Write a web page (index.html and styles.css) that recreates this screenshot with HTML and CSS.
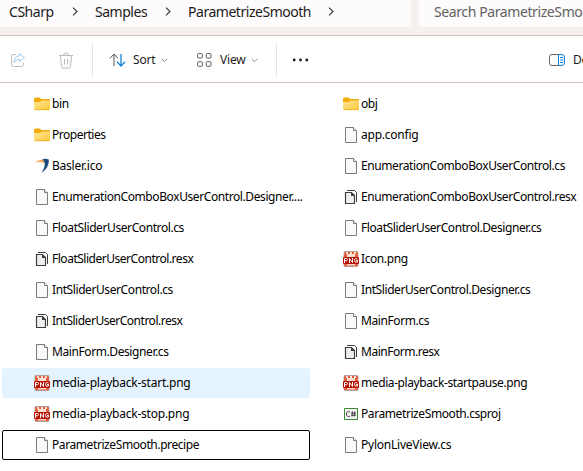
FILE: index.html
```html
<!DOCTYPE html>
<html lang="en">
<head>
<meta charset="utf-8">
<title>ParametrizeSmooth</title>
<link rel="stylesheet" href="styles.css">
</head>
<body>
<svg class="defs" width="0" height="0">
  <defs>
    <linearGradient id="gold" x1="0" y1="0" x2="1" y2="1"><stop offset="0" stop-color="#ffe69a"/><stop offset="1" stop-color="#ffc937"/></linearGradient>
    <linearGradient id="swoosh" x1="0" y1="0" x2="1" y2="0"><stop offset="0" stop-color="#f9c88a"/><stop offset="1" stop-color="#e8903a"/></linearGradient>
  </defs>
  <symbol id="folder" viewBox="0 0 16 16"><path d="M0 3q0-1.500 1.500-1.500h4L7.500 3H15q1 0 1 1v3H0z" fill="#f2ab0d"/><path d="M0 6h6l2-1.500h8V13q0 1-1 1H1q-1 0-1-1z" fill="url(#gold)"/><path d="M.5 13.700h15" stroke="#e5a918" stroke-width=".7"/></symbol>
  <symbol id="file" viewBox="0 0 16 16"><path d="M2.500.5h8l3 3v12h-11z" fill="#f9f9f9" stroke="#7b7b7b"/><path d="M10.500.5v3h3" fill="#fff" stroke="#7b7b7b"/></symbol>
  <symbol id="resx" viewBox="0 0 16 16"><path d="M4 1.500h7.500l2 2V13" fill="none" stroke="#3f3f3f"/><path d="M2.500 3.500h6l3 3v8h-9z" fill="#efeff2" stroke="#3f3f3f" stroke-width="1.200"/><path d="M8 3l4 4H8z" fill="#3f3f3f"/></symbol>
  <symbol id="basler" viewBox="0 0 16 16"><path d="M8 15.500Q13 12 14.500 7l.8-1Q14 12 8 15.500" fill="#ccc"/><path d="M.5 5Q4 1.500 9.500 1.800L11 5.500Q6 2.800 .5 5" fill="url(#swoosh)"/><path d="M8.300 1.300Q11.500.3 14.800 1.500Q15.500 9 7.500 15Q10.800 9.500 10.800 5.500Q10.500 2.500 8.300 1.300" fill="#174a7c"/></symbol>
  <symbol id="png" viewBox="0 0 16 16"><path d="M2 .5h12q1 0 1 1v13q0 1-1 1H2q-1 0-1-1v-13q0-1 1-1" fill="#ef5b38" stroke="#999" stroke-width=".7"/><path d="M3 1h2v2H3zM7 1h2v3H7zM11 1h2v2h-2zM4 3h8v3H4z" fill="#ffe0d6"/><path d="M4 13h8v1.500H4z" fill="#fbd6c8"/><rect y="6" width="16" height="7" rx="1" fill="#b51205"/><path d="M1.500 12V7.500h2q1 0 1 1t-1 1.200h-2M6.500 12V7.500l3 4V7M14.500 8q-3-1.500-3 1.500 0 2.500 3 1.500v-1.500H13" fill="none" stroke="#fff"/></symbol>
  <symbol id="csproj" viewBox="0 0 16 16"><path d="M1.500 2.500h13v11h-13z" fill="#f5f5f5" stroke="#388a34"/><path d="M7 6Q3.500 4.500 3.500 8T7 10.200M9.500 5.500l-.5 5M11.800 5.500l-.5 5M8 7h5M8 9.200h5" fill="none" stroke="#424242"/></symbol>
</svg>

<header class="top">
  <nav class="address">
    <span class="crumb c1">CSharp</span><svg class="chev v1" viewBox="0 0 6 9"><path d="M1 .7l4 3.800-4 3.800"/></svg>
    <span class="crumb c2">Samples</span><svg class="chev v2" viewBox="0 0 6 9"><path d="M1 .7l4 3.800-4 3.800"/></svg>
    <span class="crumb c3">ParametrizeSmooth</span><svg class="chev v3" viewBox="0 0 6 9"><path d="M1 .7l4 3.800-4 3.800"/></svg>
  </nav>
  <div class="search">Search ParametrizeSmooth</div>
</header>

<div class="toolbar">
  <svg class="share" viewBox="0 0 16 16"><path d="M6 2.500H3.500q-2 0-2 2v8q0 2 2 2h8q2 0 2-2V11" stroke="#bcbcbc"/><path d="M9.500 1.500l5 4-5 4.200V7.300Q6 7.200 4 10.500q.5-6.500 5.500-6.700z" stroke="#9ccbef"/></svg>
  <svg class="trash" viewBox="0 0 16 17"><path d="M1 3.500h14M5.500 3.500q0-2.500 2.500-2.500t2.500 2.500M2.500 3.500l1 11q.2 1.500 1.500 1.500h6q1.300 0 1.500-1.500l1-11M6.500 7v5.500M9.500 7v5.500" stroke="#b9b9b9"/></svg>
  <i class="sep s1"></i>
  <svg class="sort" viewBox="0 0 17 14"><path d="M.8 5.500L5 1l4 4.300M5 1v12" stroke="#555"/><path d="M8 8.700L12 13l4-4.300M12 1v12" stroke="#1683d8" stroke-width="1.300"/></svg>
  <span class="label sortl">Sort</span>
  <svg class="down d1" viewBox="0 0 7 5"><path d="M.8 1l2.700 2.700L6.200 1"/></svg>
  <svg class="view" viewBox="0 0 15 14"><g stroke="#5d5d5d"><rect x=".6" y=".6" width="4.800" height="4.400" rx="1"/><rect x="9.200" y=".6" width="4.800" height="4.400" rx="1"/><rect x=".6" y="8.700" width="4.800" height="4.600" rx="1"/><rect x="9.200" y="8.700" width="4.800" height="4.600" rx="1"/></g></svg>
  <span class="label viewl">View</span>
  <svg class="down d2" viewBox="0 0 7 5"><path d="M.8 1l2.700 2.700L6.200 1"/></svg>
  <i class="sep s2"></i>
  <svg class="more" viewBox="0 0 16 4"><g fill="#1b1b1b"><circle cx="1.700" cy="2" r="1.400"/><circle cx="8" cy="2" r="1.400"/><circle cx="14.300" cy="2" r="1.400"/></g></svg>
  <svg class="pane" viewBox="0 0 16 12"><path d="M9.500.5H3Q.5.500.5 3v6q0 2.500 2.500 2.500h6.500" stroke="#666"/><path d="M9.500.6H13q2.400 0 2.400 2.400v6q0 2.400-2.400 2.400H9.500zM11.200 3.500H14M11.200 6H14M11.200 8.500H14" stroke="#0078d4"/></svg>
  <span class="label det">Details</span>
</div>

<main class="files">
  <div class="item"><svg><use href="#folder"/></svg><span>bin</span></div>
  <div class="item"><svg><use href="#folder"/></svg><span>obj</span></div>
  <div class="item tight"><svg><use href="#folder"/></svg><span>Properties</span></div>
  <div class="item loose"><svg><use href="#file"/></svg><span>app.config</span></div>
  <div class="item loose"><svg><use href="#basler"/></svg><span>Basler.ico</span></div>
  <div class="item"><svg><use href="#file"/></svg><span>EnumerationComboBoxUserControl.cs</span></div>
  <div class="item"><svg><use href="#file"/></svg><span>EnumerationComboBoxUserControl.Designer....</span></div>
  <div class="item"><svg><use href="#resx"/></svg><span>EnumerationComboBoxUserControl.resx</span></div>
  <div class="item"><svg><use href="#file"/></svg><span>FloatSliderUserControl.cs</span></div>
  <div class="item"><svg><use href="#file"/></svg><span>FloatSliderUserControl.Designer.cs</span></div>
  <div class="item tight"><svg><use href="#resx"/></svg><span>FloatSliderUserControl.resx</span></div>
  <div class="item"><svg><use href="#png"/></svg><span>Icon.png</span></div>
  <div class="item"><svg><use href="#file"/></svg><span>IntSliderUserControl.cs</span></div>
  <div class="item"><svg><use href="#file"/></svg><span>IntSliderUserControl.Designer.cs</span></div>
  <div class="item tight"><svg><use href="#resx"/></svg><span>IntSliderUserControl.resx</span></div>
  <div class="item"><svg><use href="#file"/></svg><span>MainForm.cs</span></div>
  <div class="item"><svg><use href="#file"/></svg><span>MainForm.Designer.cs</span></div>
  <div class="item tight"><svg><use href="#resx"/></svg><span>MainForm.resx</span></div>
  <div class="item loose hover"><svg><use href="#png"/></svg><span>media-playback-start.png</span></div>
  <div class="item"><svg><use href="#png"/></svg><span>media-playback-startpause.png</span></div>
  <div class="item loose"><svg><use href="#png"/></svg><span>media-playback-stop.png</span></div>
  <div class="item"><svg><use href="#csproj"/></svg><span>ParametrizeSmooth.csproj</span></div>
  <div class="item focus"><svg><use href="#file"/></svg><span>ParametrizeSmooth.precipe</span></div>
  <div class="item loose"><svg><use href="#file"/></svg><span>PylonLiveView.cs</span></div>
</main>
</body>
</html>
```
FILE: styles.css
```css
* { box-sizing: border-box; }
body { margin: 0; width: 583px; height: 471px; overflow: hidden; background: #fff; font: 12px/16px "Noto Sans", "Open Sans", sans-serif; color: #000; }
.defs { display: block; height: 0; }
svg { flex: none; display: block; fill: none; }
span { white-space: nowrap; }
.top { display: flex; gap: 8px; height: 36px; overflow: hidden; background: #f6f1ef; border-bottom: 1px solid #d2c0ba; }
.address, .search { flex: none; height: 27px; background: #fdfbfb; font-size: 14px; line-height: 23px; letter-spacing: -.47px; white-space: nowrap; }
.address { display: flex; width: 411px; border-radius: 0 0 4px 0; color: #1b1b1b; }
.crumb { flex: none; }
.c1 { width: 63px; padding-left: 9px; }
.c2 { width: 61px; }
.c3 { width: 135px; }
.chev { width: 6px; height: 9px; stroke: #333; stroke-width: 1.1; }
.v1 { margin: 7px 17px 0 9px; }
.v2 { margin: 7px 17px 0 9px; }
.v3 { margin: 7px 0 0 5px; }
.search { width: 200px; padding-left: 15px; border-radius: 0 0 0 4px; color: #626262; letter-spacing: -.4px; }
.toolbar { display: flex; align-items: center; height: 47px; padding-top: 2px; overflow: hidden; border-bottom: 1px solid #d2c0ba; background: #fff; }
.share { width: 16px; height: 16px; margin-left: 10px; }
.trash { width: 16px; height: 17px; margin-left: 32px; }
.sep { flex: none; width: 1px; height: 32px; background: #e5e5e5; }
.s1 { margin-left: 18px; }
.sort { width: 17px; height: 14px; margin-left: 16px; }
.label { flex: none; color: #1b1b1b; letter-spacing: -.2px; }
.sortl { width: 28px; margin-left: 7px; }
.down { width: 7px; height: 5px; stroke: #8a8a8a; }
.view { width: 15px; height: 14px; margin-left: 29px; }
.viewl { width: 31px; margin-left: 8px; }
.s2 { margin-left: 18px; }
.more { width: 17px; height: 4px; margin-left: 15px; }
.pane { width: 16px; height: 12px; margin-left: 240px; }
.det { margin-left: 8px; }
.files { display: grid; grid-template-columns: 308px 273px; grid-auto-rows: 30px; gap: 1px; padding: 6px 0 0 2px; overflow: hidden; }
.item { display: flex; align-items: center; gap: 2px; padding-left: 32px; border-radius: 2px; letter-spacing: -.41px; }
.loose { letter-spacing: -.23px; }
.tight { letter-spacing: -.48px; }
.item svg { width: 16px; height: 16px; }
.hover { background: #e5f3ff; }
.focus { border: 1px solid #000; padding-left: 31px; }
```
